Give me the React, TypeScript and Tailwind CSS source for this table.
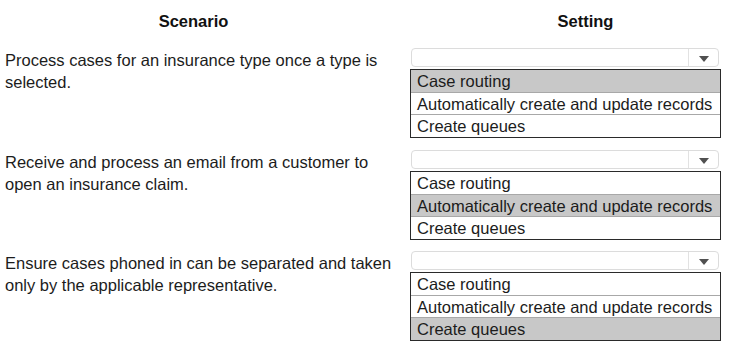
const options = [
  "Case routing",
  "Automatically create and update records",
  "Create queues",
]

const rows = [
  {
    scenario: "Process cases for an insurance type once a type is selected.",
    picked: 0,
    gap: "",
  },
  {
    scenario: "Receive and process an email from a customer to open an insurance claim.",
    picked: 1,
    gap: "mt-[12px]",
  },
  {
    scenario: "Ensure cases phoned in can be separated and taken only by the applicable representative.",
    picked: 2,
    gap: "mt-[11px]",
  },
]

const Dropdown = ({ picked }: { picked: number }) => {
  return (
    <div className="flex flex-col">
      <div className="ml-px w-[308px] h-[19px] flex rounded-[4px] border border-[#dcdcdc] bg-white">
        <div className="flex-1" />
        <div className="w-[30px] flex items-center justify-center border-l border-[#e2e2e2]">
          <svg width="10" height="6" viewBox="0 0 10 6" className="mt-[3px]">
            <polygon points="0,0 10,0 5,6" fill="#505050" />
          </svg>
        </div>
      </div>
      <div className="mt-[2px] w-[311px] border border-[#2a2a2a] bg-white">
        {options.map((opt, i) => (
          <div
            key={opt}
            className={
              (i === picked ? "bg-[#c8c8c8] " : "bg-white ") +
              (i > 0 ? "border-t border-[#a8a8a8] " : "") +
              (i === 2 ? "h-[23px] " : "h-[22px] ") +
              "pl-[6px] flex items-center leading-[22px] text-[#1c1c1c]"
            }
          >
            {opt}
          </div>
        ))}
      </div>
    </div>
  )
}

export default function App() {
  return (
    <div
      className="w-[729px] h-[355px] bg-white text-[16.5px] text-[#1c1c1c] overflow-hidden"
      style={{ fontFamily: '"Liberation Sans", Arial, sans-serif' }}
    >
      <div className="flex pt-[10px] font-bold leading-[22px] text-[#111]">
        <div className="w-[387px] text-center">Scenario</div>
        <div className="ml-[55px] w-[287px] text-center">Setting</div>
      </div>
      <div className="mt-[16px] flex flex-col">
        {rows.map(row => (
          <div key={row.scenario} className={"flex " + row.gap}>
            <div className="w-[410px] pl-[5px] pr-[8px] pt-px leading-[22px]">
              {row.scenario}
            </div>
            <Dropdown picked={row.picked} />
          </div>
        ))}
      </div>
    </div>
  )
}
